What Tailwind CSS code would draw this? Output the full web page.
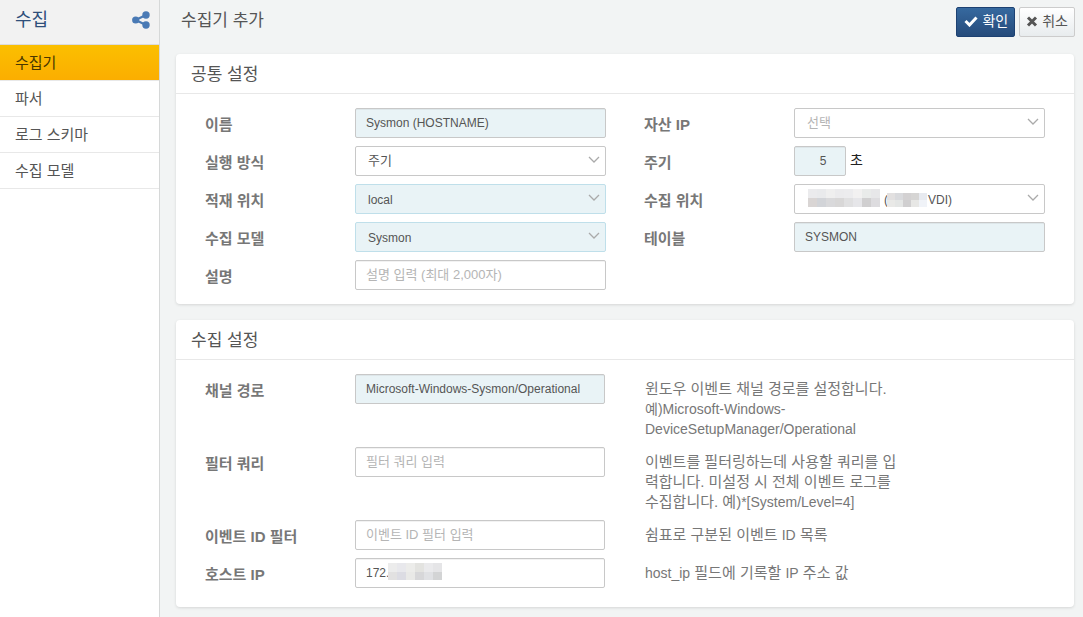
<!DOCTYPE html>
<html lang="ko">
<head>
<meta charset="utf-8">
<meta name="viewport" content="width=device-width, initial-scale=1">
<title>수집기 추가</title>
<script src="https://cdn.jsdelivr.net/npm/@tailwindcss/browser@4"></script>
</head>
<body class="flex min-h-screen bg-[#f2f4f4] font-['Liberation_Sans','Noto_Sans_CJK_KR',sans-serif] text-[15px] leading-5 text-[#555]">
<svg class="hidden" aria-hidden="true">
  <symbol id="chevron" viewBox="0 0 12 8"><path d="M1 1l5 5 5-5" fill="none" stroke="#aaa" stroke-width="1.3"/></symbol>
</svg>

<aside class="w-40 shrink-0 border-r border-[#d6d8d8] bg-white">
  <header class="flex h-[45px] items-center justify-between border-b border-[#dcdcdc] bg-[#f2f2f2] pr-[9px] pb-1 pl-[15px]">
    <h1 class="text-lg leading-6 text-[#2f4f7a]">수집</h1>
    <button type="button" aria-label="공유" class="text-[#4a7ab5]">
      <svg class="block h-[18px] w-[18px]" viewBox="0 0 18 18" fill="currentColor"><circle cx="3.7" cy="9" r="3.6"/><circle cx="14" cy="4" r="3.7"/><circle cx="14" cy="14" r="3.7"/><path d="M14 4L3.6 9 14 14" fill="none" stroke="currentColor" stroke-width="2.2"/></svg>
    </button>
  </header>
  <nav>
    <a href="#" class="block h-9 border-b border-[#e8e8e8] bg-linear-to-b from-[#fbbf00] to-[#fbae00] px-[15px] py-2 text-[#493800]">수집기</a>
    <a href="#" class="block h-9 border-b border-[#e8e8e8] px-[15px] py-2">파서</a>
    <a href="#" class="block h-9 border-b border-[#e8e8e8] px-[15px] py-2">로그 스키마</a>
    <a href="#" class="block h-9 border-b border-[#e8e8e8] px-[15px] py-2">수집 모델</a>
  </nav>
</aside>

<main class="min-w-0 flex-1 pr-[9px] pb-2 pl-4">
  <header class="flex items-start justify-between pt-[7px] pb-[17px] pl-[5px]">
    <h2 class="pt-0.5 text-[17px] leading-6">수집기 추가</h2>
    <div class="-mr-px flex gap-1">
      <button type="button" class="flex h-[30px] items-center gap-1 rounded-xs border border-[#1d4172] bg-linear-to-b from-[#36699f] to-[#264b7b] pr-1.5 pb-0.5 pl-[7px] text-sm text-white">
        <svg class="h-3 w-3.5" viewBox="0 0 14 12"><path d="M1.5 6l4 4L12.5 2.5" fill="none" stroke="currentColor" stroke-width="3"/></svg>확인</button>
      <button type="button" class="flex h-[30px] items-center gap-1 rounded-xs border border-[#ccc] bg-linear-to-b from-white to-[#e8ecee] px-1.5 pb-0.5 text-sm">
        <svg class="h-3 w-3" viewBox="0 0 12 12"><path d="M2 2.5l8 8M10 2.5l-8 8" fill="none" stroke="currentColor" stroke-width="3"/></svg>취소</button>
    </div>
  </header>

  <section class="mb-4 rounded-sm bg-white shadow-[0_1px_3px_rgba(0,0,0,0.12)]">
    <h3 class="border-b border-[#e8e8e8] px-[15px] pt-[9px] pb-1.5 text-[17px] leading-6">공통 설정</h3>
    <div class="grid grid-cols-2 gap-x-[38px] gap-y-2 px-[29px] pt-[14px] pb-[14px]">
      <div class="flex">
        <label for="name" class="w-[150px] shrink-0 pt-[7px] font-bold text-[#777]">이름</label>
        <input id="name" value="Sysmon (HOSTNAME)" class="h-[30px] min-w-0 flex-1 rounded-xs border border-[#c8c8c8] bg-[#e9f3f6] px-2.5 text-xs inset-shadow-2xs">
      </div>
      <div class="flex">
        <label for="asset" class="w-[150px] shrink-0 pt-[7px] font-bold text-[#777]">자산 IP</label>
        <div class="relative min-w-0 flex-1">
          <select id="asset" class="block h-[30px] w-full appearance-none rounded-xs border border-[#c8c8c8] bg-white px-3 text-[13px] text-[#b5b5b5]"><option>선택</option></select>
          <svg class="pointer-events-none absolute top-2.5 right-1.5 h-2 w-3"><use href="#chevron"/></svg>
        </div>
      </div>
      <div class="flex">
        <label for="mode" class="w-[150px] shrink-0 pt-[7px] font-bold text-[#777]">실행 방식</label>
        <div class="relative min-w-0 flex-1">
          <select id="mode" class="block h-[30px] w-full appearance-none rounded-xs border border-[#c8c8c8] bg-white px-3 text-[13px]"><option>주기</option></select>
          <svg class="pointer-events-none absolute top-2.5 right-1.5 h-2 w-3"><use href="#chevron"/></svg>
        </div>
      </div>
      <div class="flex">
        <label for="period" class="w-[150px] shrink-0 pt-[7px] font-bold text-[#777]">주기</label>
        <input id="period" value="5" class="h-[30px] w-[52px] rounded-xs border border-[#c8c8c8] bg-[#e9f3f6] pl-1.5 text-center text-xs inset-shadow-2xs">
        <span class="pt-1 pl-1 text-sm text-[#222]">초</span>
      </div>
      <div class="flex">
        <label for="store" class="w-[150px] shrink-0 pt-[7px] font-bold text-[#777]">적재 위치</label>
        <div class="relative min-w-0 flex-1">
          <select id="store" class="block h-[30px] w-full appearance-none rounded-xs border border-[#bfdfea] bg-[#e9f3f6] px-3 pt-0.5 text-xs"><option>local</option></select>
          <svg class="pointer-events-none absolute top-2.5 right-1.5 h-2 w-3"><use href="#chevron"/></svg>
        </div>
      </div>
      <div class="flex">
        <label for="place" class="w-[150px] shrink-0 pt-[7px] font-bold text-[#777]">수집 위치</label>
        <div class="relative min-w-0 flex-1">
          <select id="place" class="block h-[30px] w-full appearance-none rounded-xs border border-[#c8c8c8] bg-white pt-0.5 pr-3 pl-[89px] text-xs"><option>(&nbsp;&nbsp;&nbsp;&nbsp;&nbsp;&nbsp;&nbsp;&nbsp;&nbsp;&nbsp;&nbsp;&nbsp;VDI)</option></select>
          <div class="pointer-events-none absolute top-[5px] left-[14px] grid h-[18px] w-[72px] grid-cols-8">
            <i class="bg-[#ebebed]"></i><i class="bg-[#e9eaec]"></i><i class="bg-[#efefef]"></i><i class="bg-[#ebebed]"></i><i class="bg-[#ececee]"></i><i class="bg-[#f2f1f1]"></i><i class="bg-[#e9ebea]"></i><i class="bg-[#e7e7e9]"></i>
            <i class="bg-[#d9d5d4]"></i><i class="bg-[#d2d4d8]"></i><i class="bg-[#d9d9db]"></i><i class="bg-[#d8d7d7]"></i><i class="bg-[#e0e0e1]"></i><i class="bg-[#e6e6e9]"></i><i class="bg-[#d0cfd0]"></i><i class="bg-[#dddcdf]"></i>
          </div>
          <div class="pointer-events-none absolute top-[9px] left-[93px] grid h-[14px] w-[40px] grid-cols-5">
            <i class="bg-[#e2e0e0]"></i><i class="bg-[#d9dadd]"></i><i class="bg-[#d3d1d2]"></i><i class="bg-[#d6d5d4]"></i><i class="bg-[#e7eaf0]"></i>
            <i class="bg-[#e9e9e7]"></i><i class="bg-[#e4e6e5]"></i><i class="bg-[#d0cfd0]"></i><i class="bg-[#e7e7e5]"></i><i class="bg-[#f0f3f8]"></i>
          </div>
          <svg class="pointer-events-none absolute top-2.5 right-1.5 h-2 w-3"><use href="#chevron"/></svg>
        </div>
      </div>
      <div class="flex">
        <label for="model" class="w-[150px] shrink-0 pt-[7px] font-bold text-[#777]">수집 모델</label>
        <div class="relative min-w-0 flex-1">
          <select id="model" class="block h-[30px] w-full appearance-none rounded-xs border border-[#bfdfea] bg-[#e9f3f6] px-3 pt-0.5 text-xs"><option>Sysmon</option></select>
          <svg class="pointer-events-none absolute top-2.5 right-1.5 h-2 w-3"><use href="#chevron"/></svg>
        </div>
      </div>
      <div class="flex">
        <label for="table" class="w-[150px] shrink-0 pt-[7px] font-bold text-[#777]">테이블</label>
        <input id="table" value="SYSMON" class="h-[30px] min-w-0 flex-1 rounded-xs border border-[#c8c8c8] bg-[#e9f3f6] px-2.5 text-xs inset-shadow-2xs">
      </div>
      <div class="flex">
        <label for="desc" class="w-[150px] shrink-0 pt-[7px] font-bold text-[#777]">설명</label>
        <input id="desc" placeholder="설명 입력 (최대 2,000자)" class="h-[30px] min-w-0 flex-1 rounded-xs border border-[#c8c8c8] bg-white px-2.5 pb-0.5 text-[13px] inset-shadow-2xs placeholder:text-[#b5b5b5]">
      </div>
    </div>
  </section>

  <section class="rounded-sm bg-white shadow-[0_1px_3px_rgba(0,0,0,0.12)]">
    <h3 class="border-b border-[#e8e8e8] px-[15px] pt-[9px] pb-1.5 text-[17px] leading-6">수집 설정</h3>
    <div class="flex flex-col gap-2 px-[29px] pt-[14px] pb-[19px]">
      <div class="grid grid-cols-[150px_minmax(0,25fr)_minmax(0,44fr)] items-start">
        <label for="channel" class="pt-[7px] font-bold text-[#777]">채널 경로</label>
        <input id="channel" value="Microsoft-Windows-Sysmon/Operational" class="h-[30px] w-full rounded-xs border border-[#c8c8c8] bg-[#e9f3f6] px-2.5 text-xs inset-shadow-2xs">
        <p class="ml-10 w-64 pt-[5px] text-[#777]">윈도우 이벤트 채널 경로를 설정합니다. <span class="block text-sm">예)Microsoft-Windows-DeviceSetupManager/Operational</span></p>
      </div>
      <div class="grid grid-cols-[150px_minmax(0,25fr)_minmax(0,44fr)] items-start">
        <label for="query" class="pt-[7px] font-bold text-[#777]">필터 쿼리</label>
        <input id="query" placeholder="필터 쿼리 입력" class="h-[30px] w-full rounded-xs border border-[#c8c8c8] bg-white px-2.5 pb-0.5 text-[13px] inset-shadow-2xs placeholder:text-[#b5b5b5]">
        <p class="ml-10 w-64 pt-[5px] text-[#777]">이벤트를 필터링하는데 사용할 쿼리를 입력합니다. 미설정 시 전체 이벤트 로그를 <span class="block">수집합니다. 예)<span class="text-sm">*[System/Level=4]</span></span></p>
      </div>
      <div class="grid grid-cols-[150px_minmax(0,25fr)_minmax(0,44fr)] items-start">
        <label for="eventid" class="pt-[7px] font-bold text-[#777]">이벤트 ID 필터</label>
        <input id="eventid" placeholder="이벤트 ID 필터 입력" class="h-[30px] w-full rounded-xs border border-[#c8c8c8] bg-white px-2.5 pb-0.5 text-[13px] inset-shadow-2xs placeholder:text-[#b5b5b5]">
        <p class="ml-10 w-64 pt-[5px] text-[#777]">쉼표로 구분된 이벤트 <span class="text-sm">ID</span> 목록</p>
      </div>
      <div class="grid grid-cols-[150px_minmax(0,25fr)_minmax(0,44fr)] items-start">
        <label for="host" class="pt-[7px] font-bold text-[#777]">호스트 IP</label>
        <div class="relative">
          <input id="host" value="172." class="block h-[30px] w-full rounded-xs border border-[#c8c8c8] bg-white px-2.5 text-xs inset-shadow-2xs">
          <div class="pointer-events-none absolute top-[5px] left-[33px] grid h-[17px] w-[54px] grid-cols-6">
            <i class="bg-[#ececec]"></i><i class="bg-[#e8e8ec]"></i><i class="bg-[#ececea]"></i><i class="bg-[#e3e3e0]"></i><i class="bg-[#eaeaec]"></i><i class="bg-[#e5e5e7]"></i>
            <i class="bg-[#e2e1e1]"></i><i class="bg-[#dcdce3]"></i><i class="bg-[#e9e9e7]"></i><i class="bg-[#d7d7d9]"></i><i class="bg-[#e0e1e4]"></i><i class="bg-[#d3d4d5]"></i>
          </div>
        </div>
        <p class="ml-10 w-64 pt-[5px] text-[#777]"><span class="text-sm">host_ip</span> 필드에 기록할 <span class="text-sm">IP</span> 주소 값</p>
      </div>
    </div>
  </section>
</main>
</body>
</html>
